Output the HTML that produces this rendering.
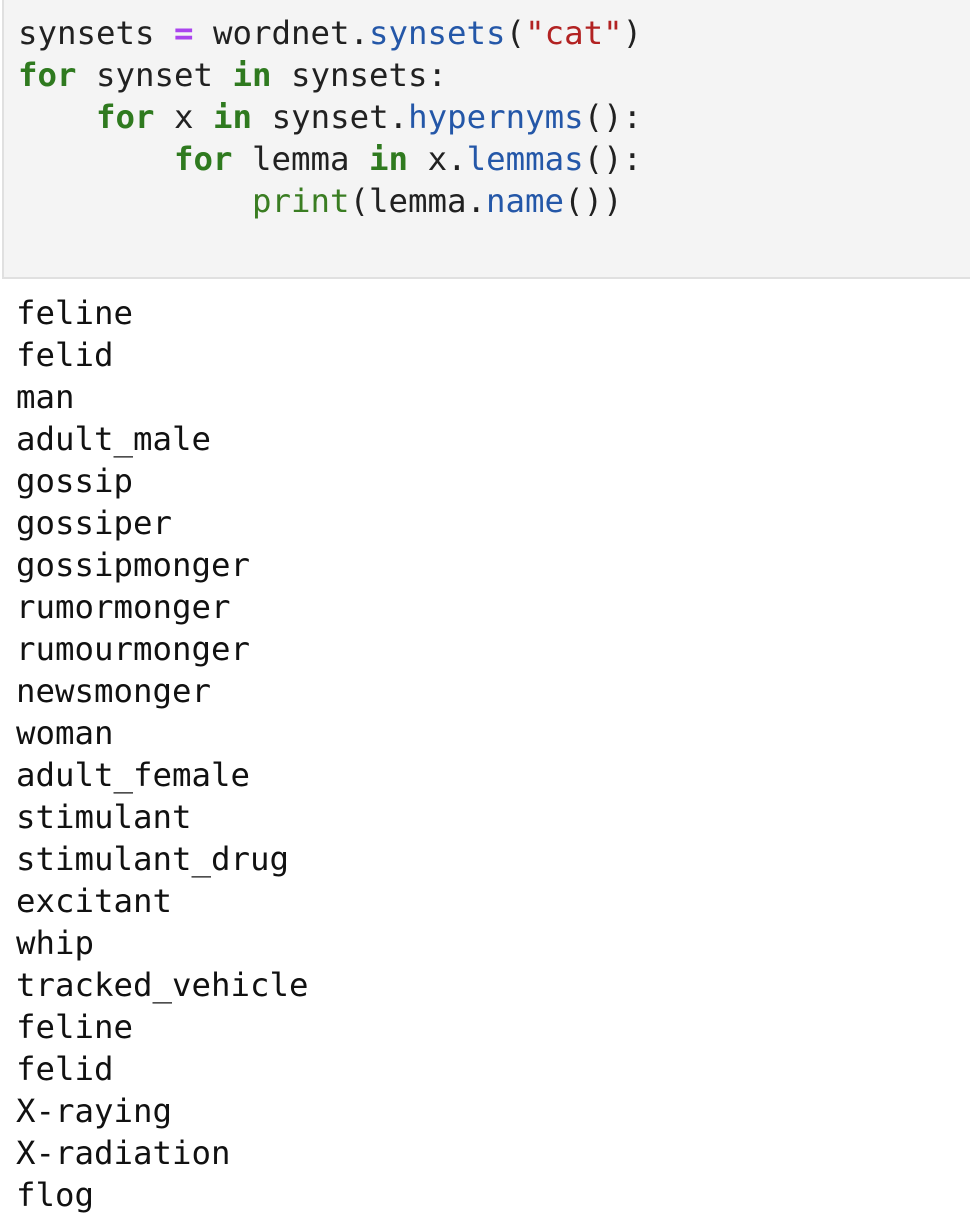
<!DOCTYPE html>
<html><head><meta charset="utf-8"><style>
body{margin:0;background:#fff;width:970px;height:1222px;overflow:hidden;font-family:"DejaVu Sans Mono","Liberation Mono",monospace;color:#212121}
.code{position:absolute;left:2px;top:-2px;width:970px;height:281px;background:#f4f4f4;border:2px solid #e0e0e0;border-top:none;border-right:none;box-sizing:border-box}
pre{margin:0;font-family:inherit}
.c{position:absolute;left:18px;top:12px;font-size:32.4px;line-height:42px}
.o{position:absolute;left:16px;top:292px;font-size:32.4px;line-height:42px;color:#111}
.k{color:#2f7a1f;font-weight:bold}.op{color:#aa44ee;font-weight:bold}.f{color:#2457a8}.s{color:#b22222}.b{color:#3a7d22}
</style></head><body>
<div class="code"></div>
<pre class="c">synsets <span class="op">=</span> wordnet.<span class="f">synsets</span>(<span class="s">"cat"</span>)
<span class="k">for</span> synset <span class="k">in</span> synsets:
    <span class="k">for</span> x <span class="k">in</span> synset.<span class="f">hypernyms</span>():
        <span class="k">for</span> lemma <span class="k">in</span> x.<span class="f">lemmas</span>():
            <span class="b">print</span>(lemma.<span class="f">name</span>())</pre>
<pre class="o">feline
felid
man
adult_male
gossip
gossiper
gossipmonger
rumormonger
rumourmonger
newsmonger
woman
adult_female
stimulant
stimulant_drug
excitant
whip
tracked_vehicle
feline
felid
X-raying
X-radiation
flog</pre>
</body></html>
